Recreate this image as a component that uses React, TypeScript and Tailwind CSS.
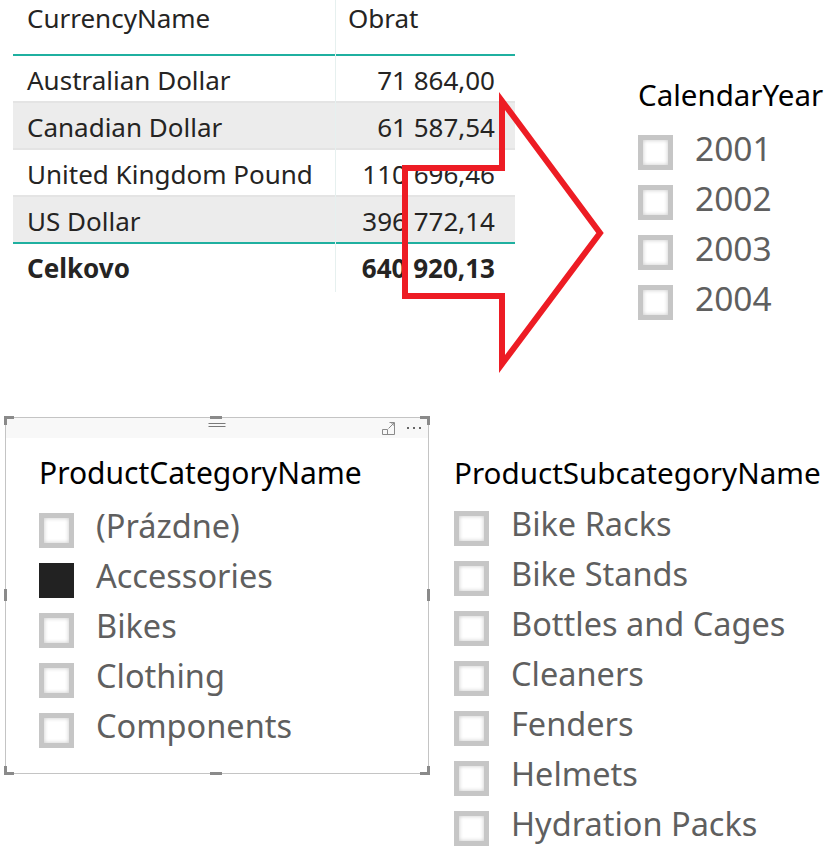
import React from 'react';

const FONT = { fontFamily: '"Noto Sans", "Open Sans", sans-serif' };

const ROWS = [
  { name: 'Australian Dollar', value: '71 864,00' },
  { name: 'Canadian Dollar', value: '61 587,54' },
  { name: 'United Kingdom Pound', value: '110 696,46' },
  { name: 'US Dollar', value: '396 772,14' },
];

const YEARS = ['2001', '2002', '2003', '2004'];
const CATEGORIES = ['(Prázdne)', 'Accessories', 'Bikes', 'Clothing', 'Components'];
const SUBCATEGORIES = [
  'Bike Racks',
  'Bike Stands',
  'Bottles and Cages',
  'Cleaners',
  'Fenders',
  'Helmets',
  'Hydration Packs',
];

const Checkbox: React.FC<{ checked?: boolean }> = ({ checked }) => (
  <span
    className={`block w-[35px] h-[35px] shrink-0 border-[5px] ${
      checked
        ? 'bg-[#222222] border-[#222222]'
        : 'bg-white border-[#c6c6c6] shadow-[inset_0_0_4px_rgba(0,0,0,0.22)]'
    }`}
  />
);

const SlicerItem: React.FC<{ label: string; checked?: boolean }> = ({ label, checked }) => (
  <div className="flex items-center h-[50px] gap-[22px]">
    <Checkbox checked={checked} />
    <span className="text-[32.5px] leading-none pb-[7px] text-[#5f5f5f] whitespace-nowrap">{label}</span>
  </div>
);

const CurrencyTable = () => (
  <div className="w-[502px] ml-[13px] relative text-[#252423]">
    {/* column divider */}
    <div className="absolute left-[322px] top-0 h-[292px] w-px bg-[#e6f0ef]" />
    <div className="flex h-[54px] text-[26px] leading-[30px] pt-[3px]">
      <div className="w-[322px] pl-[14px]">CurrencyName</div>
      <div className="flex-1 pl-[13px]">Obrat</div>
    </div>
    <div className="h-[2px] bg-[#1fb0a0]" />
    {ROWS.map((r, i) => (
      <div
        key={r.name}
        className={`flex h-[47px] items-center text-[26px] leading-none pt-[3px] border-b-2 ${
          i === ROWS.length - 1 ? 'border-[#1fb0a0]' : 'border-[#e4e4e4]'
        } ${i % 2 === 1 ? 'bg-[#ececec]' : 'bg-white'}`}
      >
        <div className="w-[322px] pl-[14px] whitespace-nowrap">{r.name}</div>
        <div className={`w-px self-stretch -mt-[3px] ${i % 2 === 1 ? 'bg-[#f8f8f8]' : 'bg-[#e6f0ef]'}`} />
        <div className="flex-1 text-right pr-[20px] whitespace-nowrap">{r.value}</div>
      </div>
    ))}
    <div className="flex h-[45px] items-center text-[26px] leading-none pt-[2px] font-bold">
      <div className="w-[322px] pl-[14px]">Celkovo</div>
      <div className="flex-1 text-right pr-[20px] whitespace-nowrap">640 920,13</div>
    </div>
  </div>
);

const Handle: React.FC<{ className: string }> = ({ className }) => (
  <div className={`absolute bg-[#8a8a8a] ${className}`} />
);

const CategorySlicer = () => (
  <div className="relative ml-[5px] w-[424px] h-[357px] border border-[#c4c4c4] bg-white">
    <div className="h-[20px] bg-[#f8f8f8] flex items-center justify-end gap-[11px] pr-[7px] relative">
      <div className="absolute left-1/2 -translate-x-1/2 top-[5px] w-[17px] flex flex-col gap-[2px]">
        <div className="h-px bg-[#7a7a7a]" />
        <div className="h-px bg-[#7a7a7a]" />
      </div>
      <svg width="15" height="15" viewBox="0 0 15 15" className="text-[#8a8a8a]">
        <path d="M8.5 1.5h5v12h-12v-5" fill="none" stroke="currentColor" />
        <path d="M1.5 8.5h5v5" fill="none" stroke="currentColor" />
        <path d="M7.5 7.5l5.5-5.5M10 2h3v3" fill="none" stroke="currentColor" />
      </svg>
      <div className="flex gap-[4px]">
        <span className="w-[2px] h-[2px] bg-[#666]" />
        <span className="w-[2px] h-[2px] bg-[#666]" />
        <span className="w-[2px] h-[2px] bg-[#666]" />
      </div>
    </div>
    <div className="pl-[33px] pt-[17px]">
      <div className="text-[30px] leading-[36px] text-black whitespace-nowrap">ProductCategoryName</div>
      <div className="mt-[14px]">
        {CATEGORIES.map((c) => (
          <SlicerItem key={c} label={c} checked={c === 'Accessories'} />
        ))}
      </div>
    </div>
    {/* corner and edge handles */}
    <Handle className="-left-[2px] -top-[2px] w-[10px] h-[3px]" />
    <Handle className="-left-[2px] -top-[2px] w-[3px] h-[9px]" />
    <Handle className="-right-[2px] -top-[2px] w-[10px] h-[3px]" />
    <Handle className="-right-[2px] -top-[2px] w-[3px] h-[9px]" />
    <Handle className="-left-[2px] -bottom-[2px] w-[10px] h-[3px]" />
    <Handle className="-left-[2px] -bottom-[2px] w-[3px] h-[9px]" />
    <Handle className="-right-[2px] -bottom-[2px] w-[10px] h-[3px]" />
    <Handle className="-right-[2px] -bottom-[2px] w-[3px] h-[9px]" />
    <Handle className="left-[204px] -top-[2px] w-[12px] h-[3px]" />
    <Handle className="left-[204px] -bottom-[2px] w-[12px] h-[3px]" />
    <Handle className="-left-[2px] top-[171px] w-[3px] h-[12px]" />
    <Handle className="-right-[2px] top-[171px] w-[3px] h-[12px]" />
  </div>
);

export default function App() {
  return (
    <div className="relative w-[832px] h-[847px] bg-white overflow-hidden" style={FONT}>
      <div className="flex h-[322px]">
        <CurrencyTable />
        <div className="ml-[123px] pt-[77px]">
          <div className="text-[29.5px] leading-[36px] text-black whitespace-nowrap">CalendarYear</div>
          <div className="mt-[14px]">
            {YEARS.map((y) => (
              <div key={y} className="flex items-center h-[50px] gap-[22px]">
                <Checkbox />
                <span className="text-[33.5px] leading-none pb-[6px] text-[#5f5f5f]">{y}</span>
              </div>
            ))}
          </div>
        </div>
      </div>

      <div className="flex mt-[95px]">
        <CategorySlicer />
        <div className="ml-[25px] pt-[38px]">
          <div className="text-[29.6px] leading-[36px] text-black whitespace-nowrap">ProductSubcategoryName</div>
          <div className="mt-[12px]">
            {SUBCATEGORIES.map((s) => (
              <SlicerItem key={s} label={s} />
            ))}
          </div>
        </div>
      </div>

      {/* red arrow annotation drawn over the table */}
      <svg className="absolute left-0 top-0 pointer-events-none" width="832" height="400">
        <polygon
          points="502,101 600,233 502,364 502,296 405,296 405,168 502,168"
          fill="none"
          stroke="#ed1c24"
          strokeWidth="6"
          strokeLinejoin="miter"
        />
      </svg>
    </div>
  );
}
